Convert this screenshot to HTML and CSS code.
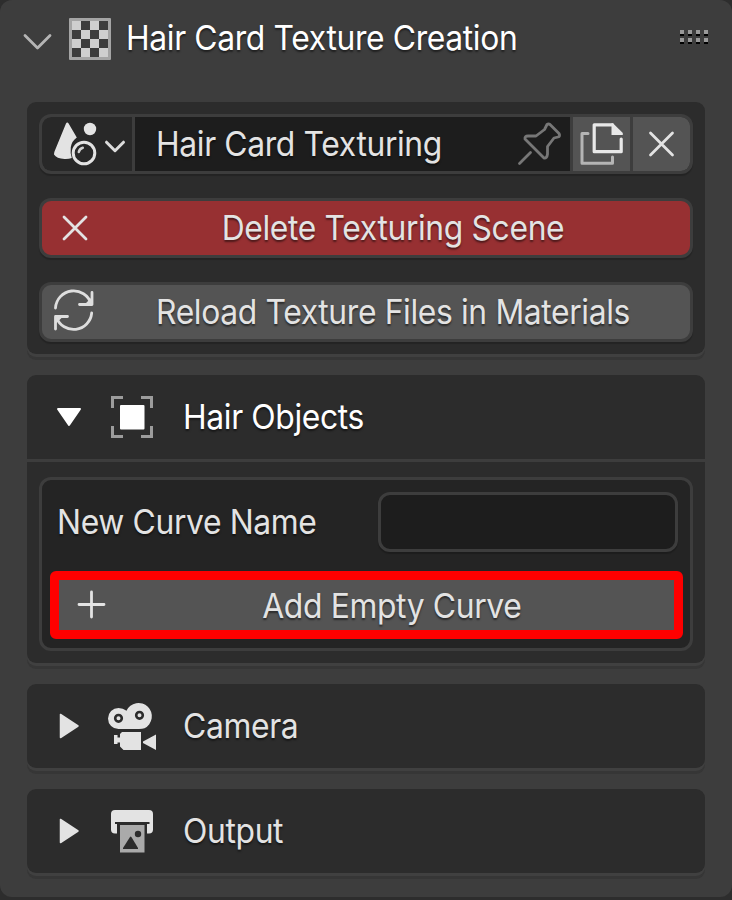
FILE: index.html
```
<!DOCTYPE html>
<html lang="en">
<head>
<meta charset="utf-8">
<title>Hair Card Texture Creation</title>
<link rel="stylesheet" href="styles.css">
</head>
<body>
<main class="panel">
  <header class="panel-header">
    <svg class="chevron" width="32" height="24" viewBox="20 30 32 24"><path d="M25 35.500 37.500 48 50 35.500"/></svg>
    <svg class="texture" width="42" height="42" viewBox="0 0 42 42">
      <rect width="42" height="42" rx="1" fill="#a5a5a5"/>
      <rect x="3" y="3" width="36" height="36" fill="#cfcfcf"/>
      <path fill="#3d3d3d" d="M12 3h9v9h-9zM30 3h9v9h-9zM3 12h9v9H3zM21 12h9v9h-9zM12 21h9v9h-9zM30 21h9v9h-9zM3 30h9v9H3zM21 30h9v9h-9z"/>
    </svg>
    <h1><span class="label title">Hair Card Texture Creation</span></h1>
    <svg class="grip" width="28" height="14" viewBox="0 0 28 14">
      <path fill="#000" d="M0 4h4v2H0zM8 4h4v2H8zM16 4h4v2h-4zM24 4h4v2h-4zM0 12h4v2H0zM8 12h4v2H8zM16 12h4v2h-4zM24 12h4v2h-4z"/>
      <path fill="#999" d="M0 0h4v4H0zM8 0h4v4H8zM16 0h4v4h-4zM24 0h4v4h-4zM0 8h4v4H0zM8 8h4v4H8zM16 8h4v4h-4zM24 8h4v4h-4z"/>
    </svg>
  </header>

  <section class="box tools">
    <div class="field scene">
      <button class="cell scene-menu" aria-label="Browse scene">
        <svg width="90" height="54" viewBox="42 117 90 54">
          <path fill="#e3e3e3" d="M67.300 122.500q.8 0 1.300 1L76.800 137.500q-5 3.500-6 9.500-.8 6 1 11-3 1.200-7.300 1-8-.4-10.500-4.500 0-1.500.5-3L66 123.500q.5-1 1.300-1z"/>
          <circle cx="90" cy="129" r="6.200" fill="#e3e3e3"/>
          <circle cx="84" cy="153" r="10.800" fill="none" stroke="#e3e3e3" stroke-width="3"/>
          <path d="M78.800 152q.8-3.500 4-4.300" fill="none" stroke="#d0d0d0" stroke-width="2.500" stroke-linecap="round"/>
          <path d="m106.500 142.200 8.500 8.500 8.500-8.500" fill="none" stroke="#dcdcdc" stroke-width="3" stroke-linecap="round" stroke-linejoin="round"/>
        </svg>
      </button>
      <div class="cell scene-name">
        <span class="label">Hair Card Texturing</span>
        <svg class="pin" width="46" height="46" viewBox="516 121 46 46">
          <path d="M547 124.500q1.500-1 3 0l9 9q1.500 3-1 3.500l-4 1-6.500 8.500v7.500q-.5 4.500-3.500 4l-19-19q-.5-3 3-3h8l8.500-6.500zM530.500 152.500 519.500 163.500"/>
        </svg>
      </div>
      <button class="cell tool" aria-label="New scene">
        <svg width="57" height="54" viewBox="573 117 57 54">
          <path d="M588 133.500h-6V163.300h30.500V157" fill="none" stroke="#b5b5b5" stroke-width="3" stroke-linecap="round" stroke-linejoin="round"/>
          <path d="M612.500 124.800H594.200V151.700H621.200V139" fill="none" stroke="#e8e8e8" stroke-width="3.200" stroke-linecap="round" stroke-linejoin="round"/>
          <path fill="#e8e8e8" d="M611.500 123.200h1.500l9.800 9.800v2h-11.300z"/>
        </svg>
      </button>
      <button class="cell tool" aria-label="Unlink scene">
        <svg width="57" height="54" viewBox="633 117 57 54"><path class="cross" d="m650.500 133 22 22m0-22-22 22"/></svg>
      </button>
    </div>
    <button class="field action danger">
      <svg width="54" height="54" viewBox="42 201 54 54"><path class="cross" d="m64 217 22 22m0-22-22 22"/></svg>
      <span class="label">Delete Texturing Scene</span>
    </button>
    <button class="field action">
      <svg width="54" height="54" viewBox="42 285 54 54">
        <path class="reload" d="M55.500 308a18.200 18.200 0 0 1 35.500-4.500M92 292.500V304.500H79.500M91.700 313a18.200 18.200 0 0 1-35.200 4.500M55.500 329V316.500H67.500"/>
        <path fill="#dedede" d="M92 297v7.500h-7.500zM55.500 324v-7.500H63z"/>
      </svg>
      <span class="label">Reload Texture Files in Materials</span>
    </button>
  </section>

  <section class="box objects">
    <div class="row active">
      <svg width="150" height="84" viewBox="27 375 150 84">
        <path fill="#fff" stroke="#fff" stroke-width="2" stroke-linejoin="round" d="M58 409h22l-11 16z"/>
        <rect x="120" y="405" width="24.500" height="24.500" rx="1" fill="#fff"/>
        <path fill="none" stroke="#9c9c9c" stroke-width="3" d="M123 397.500H112.500V408M141 397.500h10.500V408M112.500 426v10.500H123M151.500 426v10.500H141"/>
      </svg>
      <span class="label">Hair Objects</span>
    </div>
    <div class="subbox">
      <div class="name-row">
        <label class="label" for="curve">New Curve Name</label>
        <input class="field name-input" id="curve" type="text">
      </div>
      <button class="add">
        <svg width="60" height="50" viewBox="59 580 60 50"><path class="cross" d="M79 604.500h25M91.500 592v25"/></svg>
        <span class="label">Add Empty Curve</span>
      </button>
    </div>
  </section>

  <section class="box row">
    <svg width="150" height="84" viewBox="27 684 150 84">
      <path fill="#e3e3e3" stroke="#e3e3e3" stroke-width="1.500" stroke-linejoin="round" d="M60.500 714.500v23l17.500-11.500z"/>
      <path fill="#e3e3e3" d="M118.500 708q4.500 0 8 2.700a13.300 13.300 0 1 1 18 17.500Q142.500 729 139 729H118.500a10.500 10.500 0 0 1 0-21z"/>
      <circle cx="118.500" cy="718.300" r="3.300" fill="none" stroke="#2c2c2c" stroke-width="2.600"/>
      <circle cx="139.500" cy="715.300" r="3.300" fill="none" stroke="#2c2c2c" stroke-width="2.600"/>
      <path fill="#e3e3e3" d="M122 732h19v18H123.500l-3.500-3.500V742.500h-2.500V744H114V735h3.500v2.500H120V734zM156 734.500V750l-13-7v-1.500z"/>
    </svg>
    <span class="label">Camera</span>
  </section>

  <section class="box row">
    <svg width="150" height="84" viewBox="27 789 150 84">
      <path fill="#e3e3e3" stroke="#e3e3e3" stroke-width="1.500" stroke-linejoin="round" d="M60.500 819.500v23l17.500-11.500z"/>
      <path fill="#e3e3e3" d="M115 810h34q4 0 4 4v15.500q0 4-4 4h-2V824H117v9.500h-2q-4 0-4-4V814q0-4 4-4z"/>
      <path fill="#2c2c2c" d="M115 822h34.500v2H115z"/>
      <path fill="#aaa" d="M120 825h24.500v27.500H120z"/>
      <path fill="#2c2c2c" d="M130 837q.7-.8 1.400 0L138 848v1H123v-1z"/>
      <circle cx="138" cy="834" r="3.200" fill="#2c2c2c"/>
    </svg>
    <span class="label">Output</span>
  </section>
</main>
</body>
</html>
```
FILE: styles.css
```
* { box-sizing: border-box; }

body {
  margin: 0;
  background: #2d2d2d;
  font-family: Inter, "Liberation Sans", sans-serif;
  font-size: 34px;
  font-weight: 370;
  color: #e3e3e3;
}

button, input { font: inherit; color: inherit; padding: 0; margin: 0; border: 0; background: none; }
svg { display: block; flex: none; }

.panel {
  height: 897px;
  padding: 0 27px;
  background: #3d3d3d;
  border-radius: 12px;
}

.panel-header {
  display: flex;
  align-items: center;
  height: 102px;
  margin: 0 -3px 0 -7px;
  padding-bottom: 26px;
}
.chevron { margin-top: 8px; fill: none; stroke: #b5b5b5; stroke-width: 2.8; stroke-linecap: round; stroke-linejoin: round; }
.texture { margin: 2px 0 0 17px; }
.grip { margin: -2px 0 0 auto; }

h1 { flex: 1; margin: 0 0 0 15px; font: inherit; line-height: 42px; color: #fff; }

.label {
  display: inline-block;
  white-space: nowrap;
  line-height: 42px;
  letter-spacing: -.4px;
  text-shadow: 0 2px 2px rgba(0, 0, 0, .5);
  transform: scaleX(.937);
  transform-origin: 0 50%;
}

.box {
  background: #2c2c2c;
  border-radius: 9px;
  box-shadow: 0 3px 0 #404040, 0 6px 0 #363636;
}
.box + .box { margin-top: 21px; }

.tools {
  display: flex;
  flex-direction: column;
  gap: 24px;
  padding: 12px;
}

.field {
  height: 60px;
  border: 3px solid #3d3d3d;
  border-radius: 12px;
  box-shadow: 0 2px 1px rgba(0, 0, 0, .2);
}

.scene { display: flex; gap: 3px; background: #3d3d3d; overflow: hidden; }
.scene-menu { width: 90px; background: #282828; border-radius: 9px 0 0 9px; }
.scene-name { display: flex; align-items: center; flex: 1; min-width: 0; padding: 0 8px 0 21px; background: #1d1d1d; }
.pin { margin-left: auto; fill: none; stroke: #777; stroke-width: 2.8; stroke-linecap: round; stroke-linejoin: round; }
.tool { width: 57px; background: #545454; }
.tool:last-child { border-radius: 0 9px 9px 0; }
.cross { fill: none; stroke: #e3e3e3; stroke-width: 2.8; stroke-linecap: round; }
.reload { fill: none; stroke: #dedede; stroke-width: 2.8; stroke-linecap: round; stroke-linejoin: round; }

.action { display: flex; align-items: center; background: #545454; }
.action .label, .add .label { flex: 1; text-align: center; transform-origin: 50% 50%; }
.danger { background: #973032; }

.objects { height: 288px; }
.row { display: flex; align-items: center; height: 84px; }
.row .label { margin-left: 6px; }
.active {
  height: 87px;
  border-bottom: 3px solid #3d3d3d;
  color: #fff;
}

.subbox {
  height: 174px;
  margin: 15px 12px 0;
  padding: 12px 8px 0;
  background: #242424;
  border: 3px solid #3d3d3d;
  border-radius: 12px;
}
.name-row { display: flex; align-items: center; justify-content: space-between; padding: 0 4px 0 7px; }
.name-input { width: 300px; background: #1d1d1d; }

.add {
  display: flex;
  align-items: center;
  width: 633px;
  height: 68px;
  margin-top: 19px;
  border: 9px solid #f00;
  border-radius: 6px;
  background: #545454;
}
.add .label { padding: 2px 10px 0 0; }
```
